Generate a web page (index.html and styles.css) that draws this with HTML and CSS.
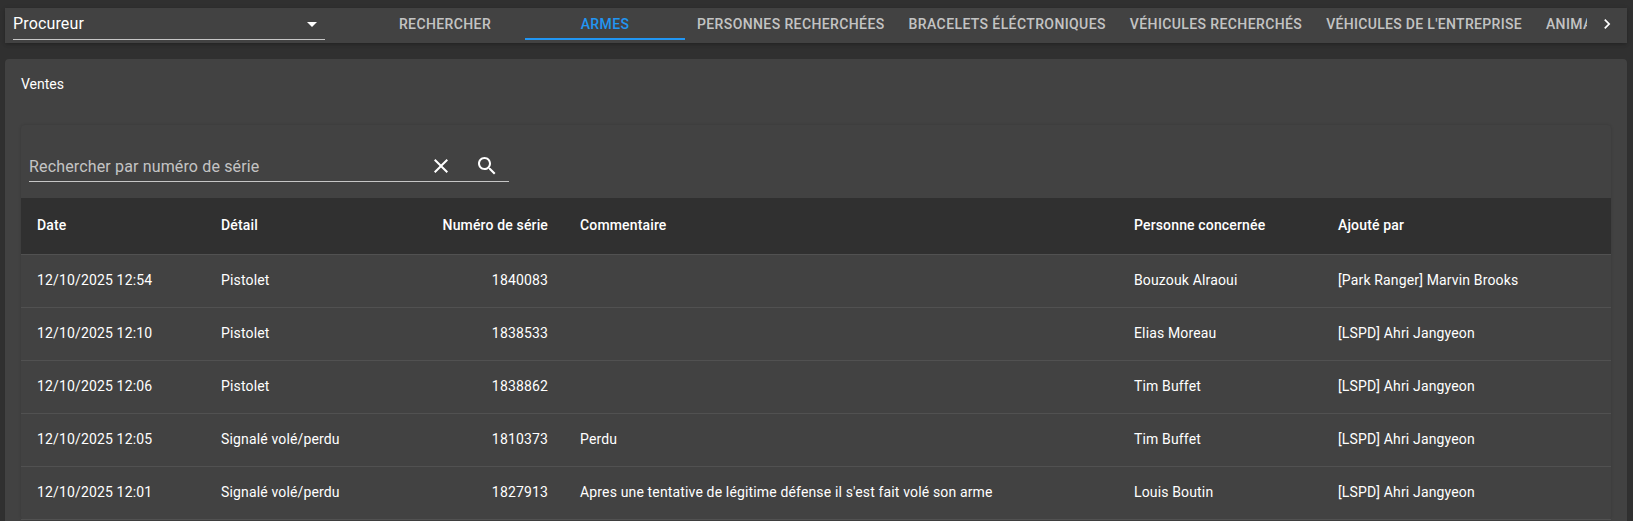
FILE: index.html
```html
<!DOCTYPE html>
<html lang="fr">
<head>
    <meta charset="UTF-8">
    <title>Armes</title>
    <link rel="stylesheet" href="styles.css">
</head>
<body>
    <!-- top bar: job select and tabs -->
    <div class="topbar">
        <div class="job-select">
            <span>Procureur</span>
            <svg class="caret" viewBox="0 0 24 24"><path d="M7 10l5 5 5-5z"/></svg>
        </div>
        <div class="tabs">
            <a class="tab">Rechercher</a>
            <a class="tab active">Armes</a>
            <a class="tab">Personnes recherchées</a>
            <a class="tab">Bracelets éléctroniques</a>
            <a class="tab">Véhicules recherchés</a>
            <a class="tab tab-tight">Véhicules de l'entreprise</a>
            <a class="tab">Animaux recherchés</a>
        </div>
        <div class="scroll-btn">
            <svg viewBox="0 0 24 24"><path d="M10 6L8.59 7.41 13.17 12l-4.58 4.59L10 18l6-6z"/></svg>
        </div>
    </div>

    <div class="card">
        <div class="card-title">Ventes</div>
        <div class="table-wrap">
            <div class="toolbar">
                <div class="search">
                    <input class="search-input" type="text" placeholder="Rechercher par numéro de série">
                    <svg class="search-clear" viewBox="0 0 24 24"><path d="M19 6.41L17.59 5 12 10.59 6.41 5 5 6.41 10.59 12 5 17.59 6.41 19 12 13.41 17.59 19 19 17.59 13.41 12z"/></svg>
                    <svg class="search-go" viewBox="0 0 24 24"><path d="M15.5 14h-.79l-.28-.27C15.41 12.59 16 11.11 16 9.5 16 5.91 13.09 3 9.5 3S3 5.91 3 9.5 5.91 16 9.5 16c1.61 0 3.09-.59 4.23-1.57l.27.28v.79l5 4.99L20.49 19l-4.99-5zm-6 0C7.01 14 5 11.99 5 9.5S7.01 5 9.5 5 14 7.01 14 9.5 11.99 14 9.5 14z"/></svg>
                </div>
            </div>
            <table class="sales">
                <thead>
                    <tr>
                        <th class="col-date">Date</th>
                        <th class="col-detail">Détail</th>
                        <th class="col-serial">Numéro de série</th>
                        <th class="col-comment">Commentaire</th>
                        <th class="col-person">Personne concernée</th>
                        <th>Ajouté par</th>
                    </tr>
                </thead>
                <tbody>
                    <tr>
                        <td>12/10/2025 12:54</td>
                        <td>Pistolet</td>
                        <td class="col-serial">1840083</td>
                        <td></td>
                        <td>Bouzouk Alraoui</td>
                        <td>[Park Ranger] Marvin Brooks</td>
                    </tr>
                    <tr>
                        <td>12/10/2025 12:10</td>
                        <td>Pistolet</td>
                        <td class="col-serial">1838533</td>
                        <td></td>
                        <td>Elias Moreau</td>
                        <td>[LSPD] Ahri Jangyeon</td>
                    </tr>
                    <tr>
                        <td>12/10/2025 12:06</td>
                        <td>Pistolet</td>
                        <td class="col-serial">1838862</td>
                        <td></td>
                        <td>Tim Buffet</td>
                        <td>[LSPD] Ahri Jangyeon</td>
                    </tr>
                    <tr>
                        <td>12/10/2025 12:05</td>
                        <td>Signalé volé/perdu</td>
                        <td class="col-serial">1810373</td>
                        <td>Perdu</td>
                        <td>Tim Buffet</td>
                        <td>[LSPD] Ahri Jangyeon</td>
                    </tr>
                    <tr>
                        <td>12/10/2025 12:01</td>
                        <td>Signalé volé/perdu</td>
                        <td class="col-serial">1827913</td>
                        <td>Apres une tentative de légitime défense il s'est fait volé son arme</td>
                        <td>Louis Boutin</td>
                        <td>[LSPD] Ahri Jangyeon</td>
                    </tr>
                </tbody>
            </table>
        </div>
    </div>
</body>
</html>
```

FILE: styles.css
```css
html, body {
    height: 521px;
    overflow: hidden;
}

body {
    margin: 0;
    padding: 8px 6px 0 5px;
    box-sizing: border-box;
    background-color: #303030;
    color: #fff;
    font-family: Roboto, "Liberation Sans", sans-serif;
    font-size: 14px;
}

.topbar {
    display: flex;
    align-items: flex-start;
    height: 35px;
    background-color: #424242;
    box-shadow: 0 2px 4px -1px rgba(0, 0, 0, 0.2), 0 1px 5px 0 rgba(0, 0, 0, 0.12);
    margin-bottom: 16px;
}

.job-select {
    display: flex;
    align-items: center;
    justify-content: space-between;
    flex-shrink: 0;
    box-sizing: border-box;
    width: 312px;
    height: 32px;
    margin-left: 8px;
    border-bottom: 1px solid rgba(255, 255, 255, 0.7);
    font-size: 16px;
    letter-spacing: 0.15px;
}

.caret {
    width: 24px;
    height: 24px;
    margin-right: 1px;
    fill: #fff;
}

.tabs {
    display: flex;
    flex: 1;
    min-width: 0;
    height: 32px;
    margin-left: 40px;
    overflow: hidden;
}

.tab {
    flex-shrink: 0;
    box-sizing: border-box;
    min-width: 160px;
    height: 32px;
    padding: 0 12px;
    line-height: 32px;
    text-align: center;
    font-weight: 500;
    text-transform: uppercase;
    letter-spacing: 0.39px;
    color: rgba(255, 255, 255, 0.7);
}

.tab-tight {
    letter-spacing: 0.31px;
}

.tab.active {
    color: #2196f3;
    border-bottom: 2px solid #2196f3;
}

.scroll-btn {
    display: flex;
    align-items: center;
    justify-content: center;
    flex-shrink: 0;
    width: 40px;
    height: 32px;
}

.scroll-btn svg {
    width: 20px;
    height: 20px;
    fill: #fff;
}

.card {
    background-color: #424242;
    border-radius: 4px;
    padding: 16px 16px 0;
    height: 470px;
    box-sizing: border-box;
    box-shadow: 0 2px 1px -1px rgba(0, 0, 0, 0.2), 0 1px 1px 0 rgba(0, 0, 0, 0.14);
}

.card-title {
    height: 18px;
    line-height: 18px;
    margin-bottom: 32px;
}

.table-wrap {
    border-radius: 4px;
    box-shadow: 0 0 3px rgba(0, 0, 0, 0.15);
}

.toolbar {
    display: flex;
    align-items: flex-end;
    height: 73px;
    box-sizing: border-box;
    padding: 0 0 16px 8px;
}

.search {
    display: flex;
    align-items: center;
    box-sizing: border-box;
    width: 480px;
    height: 32px;
    border-bottom: 1px solid rgba(255, 255, 255, 0.7);
}

.search-input {
    flex: 1;
    min-width: 0;
    padding: 2px 0 0;
    border: 0;
    outline: none;
    background: none;
    color: #fff;
    font-family: inherit;
    font-size: 16px;
    letter-spacing: 0.15px;
}

.search-input::placeholder {
    color: rgba(255, 255, 255, 0.7);
    opacity: 1;
}

.search-clear,
.search-go {
    width: 24px;
    height: 24px;
    fill: #fff;
}

.search-go {
    margin: 0 10px 0 22px;
}

.sales {
    width: 100%;
    table-layout: fixed;
    border-collapse: collapse;
}

.sales th,
.sales td {
    box-sizing: border-box;
    padding: 0 16px 2px;
    text-align: left;
    letter-spacing: 0.15px;
    border-bottom: 1px solid #515151;
}

.sales th {
    height: 56px;
    background-color: #303030;
    font-weight: 500;
}

.sales td {
    height: 53px;
}

.col-date { width: 184px; }
.col-detail { width: 190px; }
.col-comment { width: 554px; }
.col-person { width: 204px; }

.sales .col-serial {
    width: 169px;
    text-align: right;
}
```
